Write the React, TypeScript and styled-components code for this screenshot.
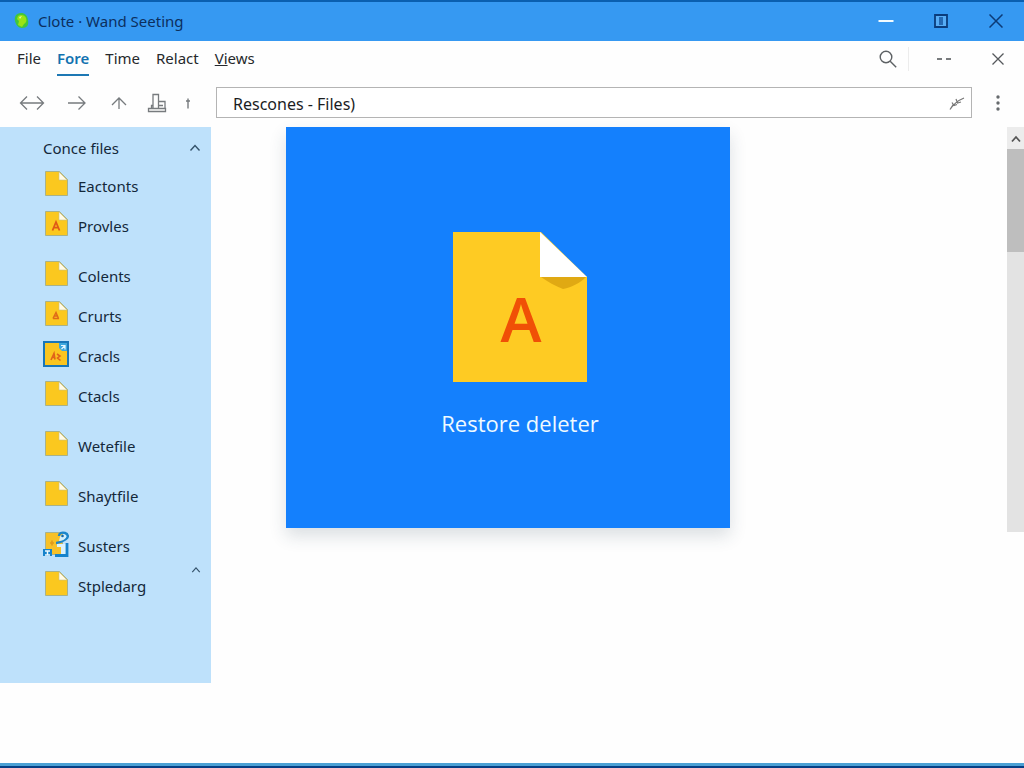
import React from "react";
import styled, { createGlobalStyle, css } from "styled-components";

const GlobalStyle = createGlobalStyle`
  * { box-sizing: border-box; }
  body { margin: 0; background: #ffffff; }
  button, input { font: inherit; color: inherit; }
  svg { display: block; flex: none; }
`;

const Window = styled.div`
  display: flex;
  flex-direction: column;
  min-height: 100vh;
  background: #fefefe;
  border-top: 2px solid #0a5fb0;
  border-bottom: 2px solid #053f85;
  font-family: "Noto Sans", "Open Sans", sans-serif;
  font-size: 15px;
  line-height: 20px;
  color: #1f2328;
`;

const TitleBar = styled.header`
  display: flex;
  align-items: center;
  height: 39px;
  padding: 0 18px 2px 13px;
  background: #3699f2;
  color: #0c2f5e;
`;

const Title = styled.h1`
  flex: 1;
  margin: 0 0 0 8px;
  font-size: 15px;
  font-weight: 400;
`;

const Controls = styled.div<{ $gap: number }>`
  display: flex;
  align-items: center;
  gap: ${(p) => p.$gap}px;
`;

const IconButton = styled.button<{ $width?: number }>`
  display: flex;
  align-items: center;
  justify-content: center;
  width: ${(p) => p.$width ?? 20}px;
  height: 24px;
  padding: 0;
  border: 0;
  background: none;
`;

const OptionsButton = styled(IconButton)`
  border-left: 1px solid #ececec;
`;

const MenuBar = styled.div`
  display: flex;
  align-items: center;
  height: 37px;
  padding: 0 16px 2px 17px;
  color: #26292c;
`;

const Menu = styled.nav`
  display: flex;
  flex: 1;
  gap: 16px;
`;

const MenuLink = styled.a<{ $active?: boolean }>`
  height: 34px;
  padding: 6px 0;
  border-bottom: 2px solid transparent;
  color: inherit;
  text-decoration: none;
  ${(p) =>
    p.$active &&
    css`
      border-color: #1d78b4;
      color: #1272b0;
      font-weight: 600;
    `}
`;

const ToolBar = styled.div`
  display: flex;
  align-items: center;
  height: 49px;
  padding: 0 16px 0 19px;
  color: #777b7e;
`;

const Tools = styled.div`
  display: flex;
  align-items: center;
  gap: 14px;
  width: 197px;
`;

const AddressBox = styled.label`
  display: flex;
  flex: 1;
  align-items: center;
  height: 31px;
  margin-right: 16px;
  padding: 0 5px 0 16px;
  border: 1px solid #b4b4b4;
  background: #ffffff;
`;

const AddressInput = styled.input`
  flex: 1;
  min-width: 0;
  padding: 2px 0 0;
  border: 0;
  outline: 0;
  background: none;
  color: #1b1d1f;
  font-size: 16px;
`;

const Body = styled.div`
  display: flex;
  flex: 1;
  align-items: flex-start;
  border-bottom: 3px solid #4aa0d4;
`;

const SideBar = styled.aside`
  width: 211px;
  min-height: 556px;
  padding: 10px 10px 75px 43px;
  background: #bee1fb;
  color: #14283a;
`;

const SideHeader = styled.div`
  display: flex;
  align-items: center;
  justify-content: space-between;
  height: 21px;
  margin-bottom: 6px;
`;

const SideTitle = styled.h2`
  margin: 0;
  font-size: 15px;
  font-weight: 400;
`;

const Groups = styled.div`
  display: flex;
  flex-direction: column;
  gap: 10px;
`;

const GroupRow = styled.div`
  display: flex;
  justify-content: space-between;
`;

const FileList = styled.ul`
  margin: 0;
  padding: 0;
  list-style: none;
`;

const FileLink = styled.a`
  display: flex;
  align-items: center;
  gap: 9px;
  height: 40px;
  color: inherit;
  text-decoration: none;
`;

const FileName = styled.span`
  padding-top: 3px;
`;

const Main = styled.main`
  display: flex;
  flex: 1;
  align-items: flex-start;
  justify-content: space-between;
  padding-left: 75px;
`;

const Card = styled.section`
  display: flex;
  flex: 0 1 444px;
  flex-direction: column;
  align-items: center;
  gap: 24px;
  padding: 105px 0 88px 24px;
  background: #1480fd;
  box-shadow: 0 8px 16px rgba(40, 60, 80, 0.16);
`;

const CardTitle = styled.h2`
  margin: 0;
  color: #effaff;
  font-family: "Open Sans", "Noto Sans", sans-serif;
  font-size: 22px;
  font-weight: 400;
  line-height: 34px;
`;

const ScrollBar = styled.div`
  width: 17px;
  height: 405px;
  background: #e3e3e3;
`;

const ScrollUp = styled.button`
  display: flex;
  align-items: center;
  justify-content: center;
  width: 100%;
  height: 22px;
  padding: 2px 0 0;
  border: 0;
  background: #ececec;
`;

const Thumb = styled.div`
  height: 103px;
  background: #bebebe;
`;

const Collapse = styled(IconButton)`
  align-self: center;
  margin-top: 12px;
`;

type FileKind = "plain" | "letter" | "small" | "framed" | "shared";

const Chevron = ({ size = 12 }: { size?: number }) => (
  <svg width={size} height={size} viewBox="0 0 12 12" fill="none" stroke="#35536b" strokeWidth="1.4">
    <path d="M1.500 8.500 6 3.500l4.500 5" />
  </svg>
);

const FileIcon = ({ kind }: { kind: FileKind }) => (
  <svg width="26" height="26" viewBox="0 0 26 26">
    {kind === "framed" ? (
      <>
        <path d="M1 1h24v24H1z" fill="#fac51f" stroke="#1976b8" strokeWidth="2" />
        <path d="M16 2h8v8h-5l-3-3z" fill="#3da7dd" />
        <path d="M18 4.500h4v4M22 4.500 18.500 8" fill="none" stroke="#e8f7ff" strokeWidth="1.200" />
        <path d="M8 19l3-6.500 1 6M9.500 16.500h2.500M14 13l3 2-2.500 2 3 2.500" fill="none" stroke="#e0621a" strokeWidth="1.600" />
      </>
    ) : kind === "shared" ? (
      <>
        <path d="M2.500 1.500h17v22h-17z" fill="#f7c128" stroke="#a5b391" />
        <path d="M14 13h9v11h-5v-8h-4z" fill="#d9f2ff" />
        <path d="M16 5c0-3 3-4 6-3s4 4 1 6-5 4-10 4" fill="none" stroke="#1b86cb" strokeWidth="2.400" />
        <path d="M17 6c1-3 5-3 6-1s-3 5-7 5z" fill="#d2effd" />
        <circle cx="19.500" cy="5" r="1.300" fill="#1467a8" />
        <path d="M0 18h9v7H0z" fill="#1683cb" />
        <path d="M2 20h5M4.500 20v4M2 24h5" fill="none" stroke="#eefaff" strokeWidth="1.500" />
        <path d="M12 24.500h12V12" fill="none" stroke="#1683cb" strokeWidth="2.800" />
        <path d="M7 12h4M9 9.500v5" stroke="#e09a1b" strokeWidth="1.600" />
      </>
    ) : (
      <>
        <path d="M2.500.5h14l8 8v16h-22z" fill="#fbc81f" stroke="#a8b28a" />
        <path d="M16 1v8h8z" fill="#fffbe8" stroke="#c7c08a" strokeWidth=".6" />
        {kind === "letter" && <path d="M9.500 19.500 13 11l3.500 8.500M10.800 16.700h4.400" fill="none" stroke="#df5a17" strokeWidth="1.800" />}
        {kind === "small" && <path d="M10 17.500l3-6 2.500 6M11 15h4M10 17.500h6" fill="none" stroke="#df6a18" strokeWidth="1.500" />}
      </>
    )}
  </svg>
);

const groups: { name: string; kind: FileKind }[][] = [
  [
    { name: "Eactonts", kind: "plain" },
    { name: "Provles", kind: "letter" },
  ],
  [
    { name: "Colents", kind: "plain" },
    { name: "Crurts", kind: "small" },
    { name: "Cracls", kind: "framed" },
    { name: "Ctacls", kind: "plain" },
  ],
  [{ name: "Wetefile", kind: "plain" }],
  [{ name: "Shaytfile", kind: "plain" }],
  [
    { name: "Susters", kind: "shared" },
    { name: "Stpledarg", kind: "plain" },
  ],
];

export default function App() {
  return (
    <>
      <GlobalStyle />
      <Window>
        <TitleBar>
          <svg width="17" height="18" viewBox="0 0 17 18">
            <path d="M8 1C3 1 1 5 2 9s3 7 7 7c5 0 7-3 6-8s-3-7-7-7z" fill="#42c63c" />
            <path d="M5 4c3-2 7-1 8 2s0 5-2 6l-2 3-4-2 1-4-2-2z" fill="#9be315" />
            <path d="M6 5l3-1-2 3z" fill="#e4fb9b" />
          </svg>
          <Title>Clote · Wand Seeting</Title>
          <Controls $gap={35}>
            <IconButton aria-label="Minimize">
              <svg width="16" height="16" viewBox="0 0 16 16"><path d="M.5 8h15" stroke="#f2fbff" strokeWidth="2" /></svg>
            </IconButton>
            <IconButton aria-label="Maximize">
              <svg width="14" height="14" viewBox="0 0 14 14">
                <path d="M1 1h12v12H1z" fill="#56acf5" stroke="#0b3c7c" strokeWidth="1.800" />
                <path d="M5 3h4v8H5z" fill="#2469b4" />
              </svg>
            </IconButton>
            <IconButton aria-label="Close">
              <svg width="14" height="14" viewBox="0 0 14 14"><path d="M.5.5l13 13M13.500.5l-13 13" stroke="#0c3a76" strokeWidth="1.500" /></svg>
            </IconButton>
          </Controls>
        </TitleBar>

        <MenuBar>
          <Menu>
            <MenuLink href="#file">File</MenuLink>
            <MenuLink href="#fore" $active>Fore</MenuLink>
            <MenuLink href="#time">Time</MenuLink>
            <MenuLink href="#relact">Relact</MenuLink>
            <MenuLink href="#views"><u>Vi</u>ews</MenuLink>
          </Menu>
          <Controls $gap={10}>
            <IconButton aria-label="Search">
              <svg width="18" height="18" viewBox="0 0 18 18" fill="none" stroke="#5d6164" strokeWidth="1.400">
                <circle cx="7" cy="7" r="5.800" />
                <path d="M11.200 11.200l6 6" />
              </svg>
            </IconButton>
            <OptionsButton aria-label="Options" $width={70}>
              <svg width="14" height="4" viewBox="0 0 14 4"><path d="M0 2h5M9 2h5" stroke="#4c5053" strokeWidth="1.600" /></svg>
            </OptionsButton>
            <IconButton aria-label="Close panel">
              <svg width="12" height="12" viewBox="0 0 12 12"><path d="M.5.5l11 11M11.500.5l-11 11" stroke="#55595c" strokeWidth="1.300" /></svg>
            </IconButton>
          </Controls>
        </MenuBar>

        <ToolBar>
          <Tools>
            <IconButton aria-label="Back" $width={26}>
              <svg width="26" height="16" viewBox="0 0 26 16" fill="none" stroke="currentColor" strokeWidth="1.300">
                <path d="M1.500 8h23M8 1.500 1.500 8 8 14.500M18 1.500 24.500 8 18 14.500" />
              </svg>
            </IconButton>
            <IconButton aria-label="Forward" $width={36}>
              <svg width="18" height="16" viewBox="0 0 18 16" fill="none" stroke="currentColor" strokeWidth="1.300">
                <path d="M0 8h17M10.500 1.500 17 8l-6.500 6.500" />
              </svg>
            </IconButton>
            <IconButton aria-label="Up">
              <svg width="16" height="14" viewBox="0 0 16 14" fill="none" stroke="currentColor" strokeWidth="1.300">
                <path d="M8 13V2M1 9l7-7 7 7" />
              </svg>
            </IconButton>
            <IconButton aria-label="Stamp" $width={28}>
              <svg width="20" height="20" viewBox="0 0 20 20" fill="none" stroke="currentColor" strokeWidth="1.300">
                <path d="M1.500 15.500h17v3h-17zM6 15.500v-14h5.500v14M6 12.500H4.500v3M11.500 8.500h6.500v7M12 12.500h4" />
              </svg>
            </IconButton>
            <IconButton aria-label="Pin" $width={6}>
              <svg width="6" height="12" viewBox="0 0 6 12" fill="none" stroke="currentColor" strokeWidth="1.400">
                <path d="M3 11.500v-10M1 4h4" />
              </svg>
            </IconButton>
          </Tools>
          <AddressBox>
            <AddressInput aria-label="Address" defaultValue="Rescones - Files)" />
            <svg width="18" height="16" viewBox="0 0 18 16" fill="none" stroke="#777" strokeWidth="1.200">
              <path d="M2 14.500c3-5 8-9 14-11.500M2 14.500 5.500 9M4 7.500l2 3 3-1M8 4l1.500 4L13 7" />
            </svg>
          </AddressBox>
          <IconButton aria-label="More">
            <svg width="6" height="18" viewBox="0 0 6 18" fill="#666a6d">
              <circle cx="3" cy="3" r="1.700" /><circle cx="3" cy="9" r="1.700" /><circle cx="3" cy="15" r="1.700" />
            </svg>
          </IconButton>
        </ToolBar>

        <Body>
          <SideBar>
            <SideHeader>
              <SideTitle>Conce files</SideTitle>
              <IconButton aria-label="Collapse section" $width={12}><Chevron /></IconButton>
            </SideHeader>
            <Groups>
              {groups.map((items, i) => (
                <GroupRow key={i}>
                  <FileList>
                    {items.map((item) => (
                      <li key={item.name}>
                        <FileLink href="#files">
                          <FileIcon kind={item.kind} />
                          <FileName>{item.name}</FileName>
                        </FileLink>
                      </li>
                    ))}
                  </FileList>
                  {i === groups.length - 1 && (
                    <Collapse aria-label="Scroll list up" $width={10}><Chevron size={10} /></Collapse>
                  )}
                </GroupRow>
              ))}
            </Groups>
          </SideBar>
          <Main>
            <Card>
              <svg width="134" height="150" viewBox="0 0 134 150">
                <path d="M0 0h88l46 45v105H0z" fill="#fecb23" />
                <path d="M88 45h45c-6 6-14 10-23 12-8-3-15-7-22-12z" fill="#e0a913" />
                <path d="M87 0l47 45H87z" fill="#fff" />
                <text x="68" y="110" textAnchor="middle" fontFamily="Open Sans" fontSize="62" fontWeight="600" fill="#f05006">A</text>
              </svg>
              <CardTitle>Restore deleter</CardTitle>
            </Card>
            <ScrollBar>
              <ScrollUp aria-label="Scroll up">
                <svg width="10" height="8" viewBox="0 0 10 8" fill="none" stroke="#555" strokeWidth="1.800"><path d="M1 6.500 5 2l4 4.500" /></svg>
              </ScrollUp>
              <Thumb />
            </ScrollBar>
          </Main>
        </Body>
      </Window>
    </>
  );
}
